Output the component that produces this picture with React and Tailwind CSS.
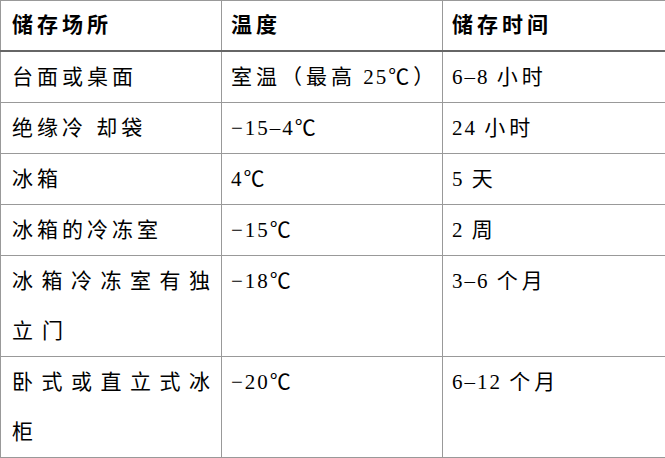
import React from "react";

const rows = [
  { place: "台面或桌面", temp: "室温（最高 25℃）", time: "6–8 小时" },
  { place: "绝缘冷 却袋", temp: "−15–4℃", time: "24 小时" },
  { place: "冰箱", temp: "4℃", time: "5 天" },
  { place: "冰箱的冷冻室", temp: "−15℃", time: "2 周" },
  { place: ["冰箱冷冻室有独", "立门"], temp: "−18℃", time: "3–6 个月" },
  { place: ["卧式或直立式冰", "柜"], temp: "−20℃", time: "6–12 个月" },
];

const font = "font-['Liberation_Serif','Noto_Sans_CJK_SC',serif]";

// wide chars get more spacing than digits
const Mixed = ({ text }) => {
  const parts = text.match(/[\u2100-\u21ff\u3000-\u9fff\uff00-\uffef]+|[^\u2100-\u21ff\u3000-\u9fff\uff00-\uffef]+/g);
  return parts.map((p, i) =>
    /[\u2100-\u21ff\u3000-\u9fff\uff00-\uffef]/.test(p) ? (
      <span key={i} className="tracking-[4px]">{p}</span>
    ) : (
      <span key={i} className="tracking-[2px]">{p}</span>
    )
  );
};

const App = () => {
  return (
    <div className={`w-[665px] h-[458px] bg-white text-[21px] text-black ${font} [text-spacing-trim:space-all]`}>
      <table className="w-[665px] border-collapse table-fixed">
        <colgroup>
          <col className="w-[221px]" />
          <col className="w-[221px]" />
          <col className="w-[223px]" />
        </colgroup>
        <thead>
          <tr>
            {["储存场所", "温度", "储存时间"].map((h, i) => (
              <th key={i} className={`border border-[#999] border-b-2 border-b-[#666] ${i === 0 ? "px-[11px]" : "px-[9px]"} text-left align-middle font-bold tracking-[4px] leading-[49px]`}>
                {h}
              </th>
            ))}
          </tr>
        </thead>
        <tbody>
          {rows.map((r, i) => (
            <tr key={i}>
              <td className="border border-[#999] px-[11px] align-top leading-[50px] tracking-[4px]">
                {Array.isArray(r.place) ? (
                  <>
                    <div className="[text-align-last:justify] tracking-normal">{r.place[0]}</div>
                    <div className="tracking-[9px]">{r.place[1]}</div>
                  </>
                ) : (
                  r.place
                )}
              </td>
              <td className="border border-[#999] px-[9px] align-top leading-[50px] whitespace-nowrap">
                <Mixed text={r.temp} />
              </td>
              <td className="border border-[#999] px-[9px] align-top leading-[50px] whitespace-nowrap">
                <Mixed text={r.time} />
              </td>
            </tr>
          ))}
        </tbody>
      </table>
    </div>
  );
};

export default App;
